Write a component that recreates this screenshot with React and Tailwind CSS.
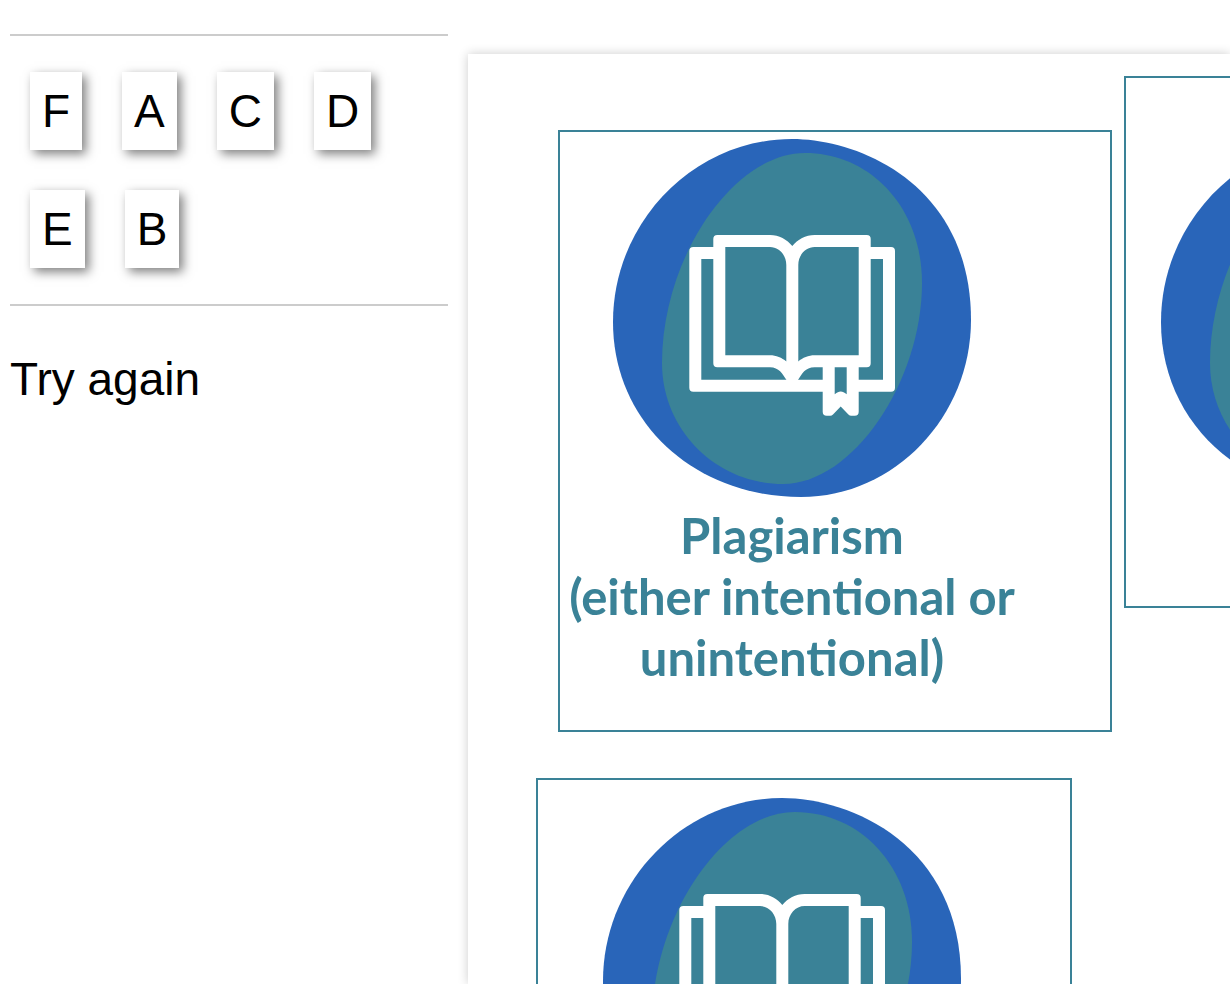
import React, { useState } from 'react';
import clsx from 'clsx';

const LABELS = ['F', 'A', 'C', 'D', 'E', 'B'];

const BookBadge = () => (
  <svg
    className="block size-[358px] shrink-0"
    viewBox="0 0 358 358"
    fill="none"
    role="img"
    aria-label="Open book"
  >
    <path
      fill="#2965b9"
      d="M179 0C248 0 358 47 358 181C358 277 282 358 188 358C82 358 0 284 0 183C0 83 81 0 179 0Z"
    />
    <path
      fill="#3a8297"
      d="M192 14C257 14 309 68 309 144C309 242 240 345 170 345C103 345 49 291 49 224C49 119 120 14 192 14Z"
    />
    <g fill="#fff">
      {/* cover */}
      <path d="M76.3 112a4 4 0 0 1 4-4H102v12H88.3V240.7H215v12H80.3a4 4 0 0 1-4-4Z" />
      <path d="M240 240.7H270V120H256V108H278a4 4 0 0 1 4 4V248.7a4 4 0 0 1-4 4H240Z" />
      {/* pages */}
      <path
        fillRule="evenodd"
        d="M100.3 100a4 4 0 0 1 4-4H157C166 96 174 100.500 179.300 107C184.600 100.500 192.600 96 201.600 96H253.700a4 4 0 0 1 4 4V224.300a4 4 0 0 1-4 4H201.600C192 228.300 189 235 185 241H173.500C169.500 235 166 228.300 157 228.300H104.300a4 4 0 0 1-4-4ZM112.300 108V216.300H157C163 216.300 169 218.800 173.300 222.500V126C173.300 116 166 108 157 108ZM245.700 108V216.300H201.600C195.600 216.300 189.600 218.800 185.300 222.500V126C185.300 116 192.600 108 201.600 108Z"
      />
      {/* bookmark */}
      <path d="M209.700 226V272.700a4 4 0 0 0 4 4h3.500c1 0 2-.4 2.800-1.200L227.700 267.500L235.400 275.500c.8.8 1.800 1.200 2.800 1.200h3.500a4 4 0 0 0 4-4V226h-12V255.300C231 253.300 230 252.500 227.700 252.500S224.400 253.300 221.700 255.300V226Z" />
    </g>
  </svg>
);

const DropZone = ({ className, children }) => (
  <div className={clsx('flex shrink-0 flex-col border-2 border-[#3a8297]', className)}>
    {children}
  </div>
);

const LabelBank = ({ selected, onSelect }) => (
  <div className="flex flex-wrap gap-10 border-y-2 border-[#ccc] px-5 py-9">
    {LABELS.map((label) => (
      <button
        key={label}
        type="button"
        draggable
        aria-pressed={selected === label}
        onClick={() => onSelect(label)}
        className="cursor-grab bg-white p-3 shadow-[4px_4px_10px_rgba(0,0,0,0.5)]"
      >
        {label}
      </button>
    ))}
  </div>
);

const App = () => {
  const [selected, setSelected] = useState(null);

  return (
    <main className="flex h-screen gap-5 overflow-hidden bg-white pl-[10px] font-['Liberation_Sans',Arial,sans-serif] text-[46px] leading-[54px] text-black">
      <aside className="w-[438px] shrink-0 pt-[34px]">
        <LabelBank selected={selected} onSelect={setSelected} />
        <p className="mt-[46px]">Try again</p>
      </aside>

      <section className="mt-[54px] min-w-0 flex-1 pt-[22px] shadow-[0_0_10px_rgba(0,0,0,0.2)]">
        <div className="flex items-start gap-3 pl-[90px]">
          <DropZone className="mt-[54px] h-[602px] w-[554px] items-center pt-[7px] pr-[86px]">
            <BookBadge />
            <p className="mt-2 text-center font-['Lato','Open_Sans',sans-serif] text-[49px] leading-[61px] font-bold whitespace-nowrap text-[#3a8297]">
              Plagiarism
              <br />
              (either intentional or
              <br />
              unintentional)
            </p>
          </DropZone>
          <DropZone className="h-[532px] w-[554px] pt-[61px] pl-[35px]">
            <BookBadge />
          </DropZone>
        </div>

        <DropZone className="mt-[46px] ml-[68px] h-[602px] w-[536px] items-center pt-[18px] pr-[44px]">
          <BookBadge />
        </DropZone>
      </section>
    </main>
  );
};

export default App;
